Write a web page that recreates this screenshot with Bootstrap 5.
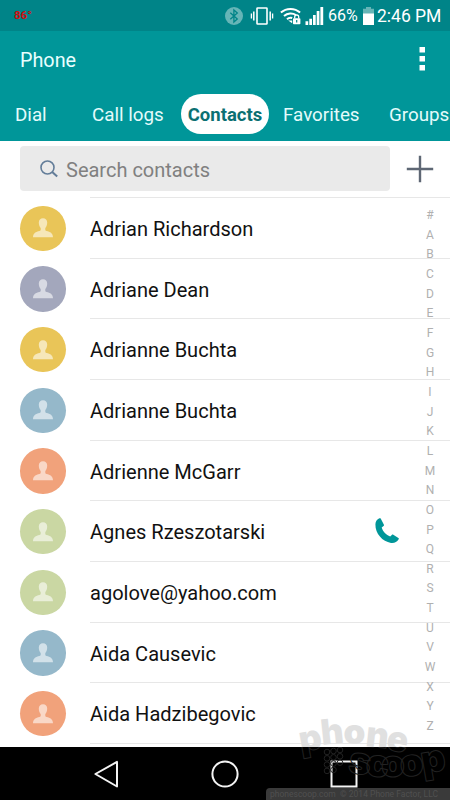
<!DOCTYPE html>
<html lang="en">
<head>
  <meta charset="UTF-8">
  <meta name="viewport" content="width=device-width, initial-scale=1.0">
  <title>Phone - Contacts</title>
  <link href="https://cdn.jsdelivr.net/npm/bootstrap@5.3.2/dist/css/bootstrap.min.css" rel="stylesheet">
  <style>
    body { font-family: Roboto, "Liberation Sans", sans-serif; color: #111; }
    svg { display: block; flex: none; }
    .phone { width: 450px; height: 800px; background: #fff; }

    .status { height: 31px; background: #008488; padding: 1px 9px 0 14px; }
    .temp { font-size: 11.5px; font-weight: 700; color: #d00c0c; }
    .pct { font-size: 16px; margin-left: 4px; width: 31px; }
    .clock { font-size: 17.5px; margin-left: 3px; width: 64px; padding-top: 1px; }

    .title-bar { height: 57px; background: #009699; padding: 0 23px 0 20px; }
    .title-bar h1 { font-size: 19.8px; font-weight: 400; color: #e9ffff; padding-top: 2px; }
    .tabs { height: 53px; background: #009699; padding-top: 6px; }
    .tabs .nav-link { padding: 0; font-size: 18.8px; line-height: 42px; height: 40px; color: #e4fbfb; white-space: nowrap; }
    .tabs .nav-link.active { background: #fff; color: #0b7072; font-size: 18.5px; font-weight: 700; border-radius: 20px; text-align: center; }

    .search-row { height: 56px; padding: 5px 16px 0 20px; }
    .search-box { width: 370px; height: 45px; background: #eaeaea; border-radius: 4px; padding-left: 19px; font-size: 20px; color: #808080; }
    .search-box span { margin-left: 7px; padding-top: 2px; }

    .contacts { height: 550px; }
    .contact { height: 60.67px; padding-left: 20px; }
    .avatar { width: 45.5px; height: 45.5px; margin: 2px 24.5px 0 0; border-radius: 50%; flex: none; }
    .contact-name { font-size: 20.05px; height: 60.67px; border-top: 1px solid #e7e7e7; padding-top: 2.4px; }
    .yellow { background: #e9c558; }
    .violet { background: #a3a7bc; }
    .blue { background: #95b8ca; }
    .orange { background: #f1a27b; }
    .green { background: #cad7a3; }

    .az-index { top: 8px; right: 10px; width: 20px; font-size: 12px; color: #b0b0b0; }
    .az-index span { height: 19.66px; line-height: 20.2px; text-align: center; }

    .nav-keys { height: 53px; background: #000; }
    .watermark { left: 295px; top: 712px; pointer-events: none; }
    .credit { right: 0; bottom: 0; width: 184px; height: 12px; background: #3a3a3a; border-radius: 4px 0 0 0; font-size: 8.5px; line-height: 12px; color: #505050; white-space: nowrap; padding-left: 4px; }
  </style>
</head>
<body>
  <div class="phone position-relative overflow-hidden d-flex flex-column">

    <!-- Status bar -->
    <div class="status d-flex align-items-center text-white">
      <span class="temp me-auto">86°</span>
      <svg width="18" height="18" viewBox="0 0 18 18">
        <circle cx="9" cy="9" r="9" fill="#66b5b7"/>
        <path d="M5.3 5.8l7 6.3-3.4 3V3l3.4 3-7 6.2" fill="none" stroke="#008488" stroke-width="1.3"/>
      </svg>
      <svg width="24" height="20" viewBox="0 0 24 20" style="margin-left:7px" fill="none" stroke="#fff">
        <rect x="7" y="2" width="10" height="16" rx=".6" stroke-width="1.6"/>
        <path d="M3.8 5.5v9M20.2 5.5v9" stroke-width="1.5"/>
        <path d="M1.4 7.5v5M22.6 7.5v5" stroke-width="1.3"/>
      </svg>
      <svg width="21" height="18" viewBox="0 0 21 18" style="margin-left:6px" fill="none" stroke="#fff" stroke-width="2">
        <path d="M.9 5.6C6.3.8 14.7.8 20.1 5.6M4 9.1c3.5-3.2 8.5-3.4 12-1.1M7 12.2c1.6-1.5 3.6-1.8 5.2-1.2"/>
        <path d="M8.2 13.6h4v2.6z" fill="#fff" stroke="none"/>
        <rect x="13" y="11.2" width="7.4" height="6" rx=".8" fill="#fff" stroke="none"/>
        <path d="M14.7 11.5V10a2 2 0 0 1 4 0v1.5" stroke-width="1.3"/>
        <path d="M16.7 13v2.4" stroke="#008488" stroke-width="1.2"/>
      </svg>
      <svg width="19" height="18" viewBox="0 0 19 18" style="margin-left:4px" fill="#fff">
        <path d="M.5 14.2h2.7V18H.5zM4.3 11.8H7V18H4.3zM8 8h2.7v10H8zM11.7 4h2.7v14h-2.7zM15.4 0h2.8v18h-2.8z"/>
      </svg>
      <span class="pct text-nowrap">66%</span>
      <svg width="11" height="18" viewBox="0 0 11 18" style="margin-left:4px">
        <path d="M3 0h5v1.8h3V7H0V1.8h3z" fill="#66b5b7"/>
        <path d="M0 6.5h11V18H0z" fill="#fff"/>
      </svg>
      <span class="clock text-nowrap">2:46 PM</span>
    </div>

    <!-- Title and tabs -->
    <div class="title-bar d-flex align-items-center justify-content-between">
      <h1 class="m-0">Phone</h1>
      <svg width="10" height="25" viewBox="0 0 10 25" fill="#fff">
        <path d="M2.5 0H8v5.5H2.5zM2.5 9H8v5.5H2.5zM2.5 18H8v5.5H2.5z"/>
      </svg>
    </div>
    <ul class="tabs nav flex-nowrap mb-0">
      <li style="margin-left:15px;width:77px"><a class="nav-link" href="#">Dial</a></li>
      <li style="width:89px"><a class="nav-link" href="#">Call logs</a></li>
      <li style="width:88px"><a class="nav-link active" href="#">Contacts</a></li>
      <li style="margin-left:14px;width:106px"><a class="nav-link" href="#">Favorites</a></li>
      <li><a class="nav-link" href="#">Groups</a></li>
    </ul>

    <!-- Search -->
    <div class="search-row d-flex align-items-start justify-content-between">
      <div class="search-box d-flex align-items-center">
        <svg width="20" height="20" viewBox="0 0 20 20" fill="none" stroke="#637d99" stroke-width="1.6">
          <circle cx="8.5" cy="8.5" r="6.5"/>
          <path d="M13.2 13l5 4.6" stroke-width="2"/>
        </svg>
        <span>Search contacts</span>
      </div>
      <svg width="28" height="28" viewBox="0 0 28 28" style="margin-top:9px" stroke="#5e6774" stroke-width="2.4">
        <path d="M14 .8v26.4M.8 14h26.4"/>
      </svg>
    </div>

    <!-- Contact list, rows come from the script below -->
    <div class="contacts position-relative overflow-hidden">
      <div id="contact-list"></div>
      <div id="az-index" class="az-index position-absolute d-flex flex-column"></div>
    </div>

    <!-- Navigation keys -->
    <div class="nav-keys d-flex align-items-center">
      <svg width="26" height="28" viewBox="0 0 26 28" style="margin-left:93px" fill="none" stroke="#f4f4f4" stroke-width="2">
        <path d="M2.4 14L24 1.9v24.6z" stroke-linejoin="round"/>
      </svg>
      <svg width="28" height="28" viewBox="0 0 28 28" style="margin-left:92px" fill="none" stroke="#f4f4f4" stroke-width="2">
        <circle cx="14" cy="14" r="12.6"/>
      </svg>
      <svg width="28" height="28" viewBox="0 0 28 28" style="margin-left:91px" fill="none" stroke="#f4f4f4" stroke-width="2">
        <rect x="1.5" y="1.5" width="25" height="25"/>
      </svg>
    </div>

    <!-- Site logo over the bottom corner -->
    <svg class="watermark position-absolute" width="155" height="75" viewBox="0 0 155 75"
      font-family="Inter, sans-serif" font-weight="900" stroke-linejoin="round">
      <defs>
        <clipPath id="over-list"><rect width="155" height="35"/></clipPath>
        <clipPath id="over-keys"><rect y="35" width="155" height="40"/></clipPath>
        <g id="logo">
          <text font-size="35" x="6 27 48.5 70 90" y="40 33 31.5 34 37" rotate="-10 -6 0 6 12">phone</text>
          <text font-size="38" x="52 70 86 106 128" y="60 63.5 65 65 62" rotate="10 5 0 -6 -10">scoop</text>
          <g id="dots"></g>
        </g>
      </defs>
      <use href="#logo" clip-path="url(#over-list)" fill="#e0e0e0"/>
      <use href="#logo" clip-path="url(#over-keys)" fill="none" stroke="#222" stroke-width="1"/>
    </svg>
    <div class="credit position-absolute">phonescoop.com &nbsp;© 2014 Phone Factor, LLC</div>
  </div>

  <script src="https://cdn.jsdelivr.net/npm/bootstrap@5.3.2/dist/js/bootstrap.bundle.min.js"></script>
  <script>
    const contacts = [
      { name: "Adrian Richardson", color: "yellow" },
      { name: "Adriane Dean", color: "violet" },
      { name: "Adrianne Buchta", color: "yellow" },
      { name: "Adrianne Buchta", color: "blue" },
      { name: "Adrienne McGarr", color: "orange" },
      { name: "Agnes Rzeszotarski", color: "green", call: true },
      { name: "agolove@yahoo.com", color: "green" },
      { name: "Aida Causevic", color: "blue" },
      { name: "Aida Hadzibegovic", color: "orange" },
      { name: "", color: "" }
    ];

    const person = `<svg width="20" height="20" viewBox="0 0 20 20" fill="#fff" fill-opacity=".58">
      <path d="M10 .2c2.6 0 4.2 1.7 4.2 4.4 0 2.3-.8 4.3-1.9 5.4v1.8c0 .6.5 1 1.2 1.2 3.700.9 6.3 2 6.5 6.2H0c.2-4.2 2.8-5.3 6.5-6.2.7-.2 1.2-.6 1.2-1.2V10C6.6 8.9 5.8 6.9 5.8 4.6 5.8 1.900 7.400.2 10 .2z"/>
    </svg>`;
    const handset = `<svg width="24" height="26" viewBox="0 0 24 26" fill="#009699" style="margin:-2px 51px 0 0">
      <path d="M5.700.5L8.800 6.400c.4.700.2 1.200-.3 1.600L6.700 9.500c1.200 4 4.500 7.500 8.500 9l1.600-1.600c.5-.4 1-.4 1.500-.1l5.100 3.200c.6.4.6.9.1 1.500-1.600 2.400-4 3.800-7.500 3.400C7.500 23.800.2 15.500.4 6.300.5 3.500 2 1.300 4.400.3c.6-.3 1-.2 1.300.2z"/>
    </svg>`;

    document.getElementById("contact-list").innerHTML = contacts.map(c => `
      <div class="contact d-flex align-items-center">
        <div class="avatar ${c.color} d-flex align-items-center justify-content-center">${c.name ? person : ""}</div>
        <div class="contact-name flex-grow-1 d-flex align-items-center justify-content-between">
          <span>${c.name}</span>${c.call ? handset : ""}
        </div>
      </div>`).join("");

    document.getElementById("az-index").innerHTML =
      [..."#ABCDEFGHIJKLMNOPQRSTUVWXYZ"].map(l => `<span>${l}</span>`).join("");

    // Dotted keypad next to the logo
    let dots = "";
    for (let row = 0; row < 4; row++) {
      for (let col = 0; col < 3; col++) {
        if (row === 3 && col === 2) continue;
        dots += `<circle cx="${32 + col * 6.5}" cy="${40 + row * 6.3 - col}" r="2.8"/>`;
      }
    }
    document.getElementById("dots").innerHTML = dots;
  </script>
</body>
</html>
